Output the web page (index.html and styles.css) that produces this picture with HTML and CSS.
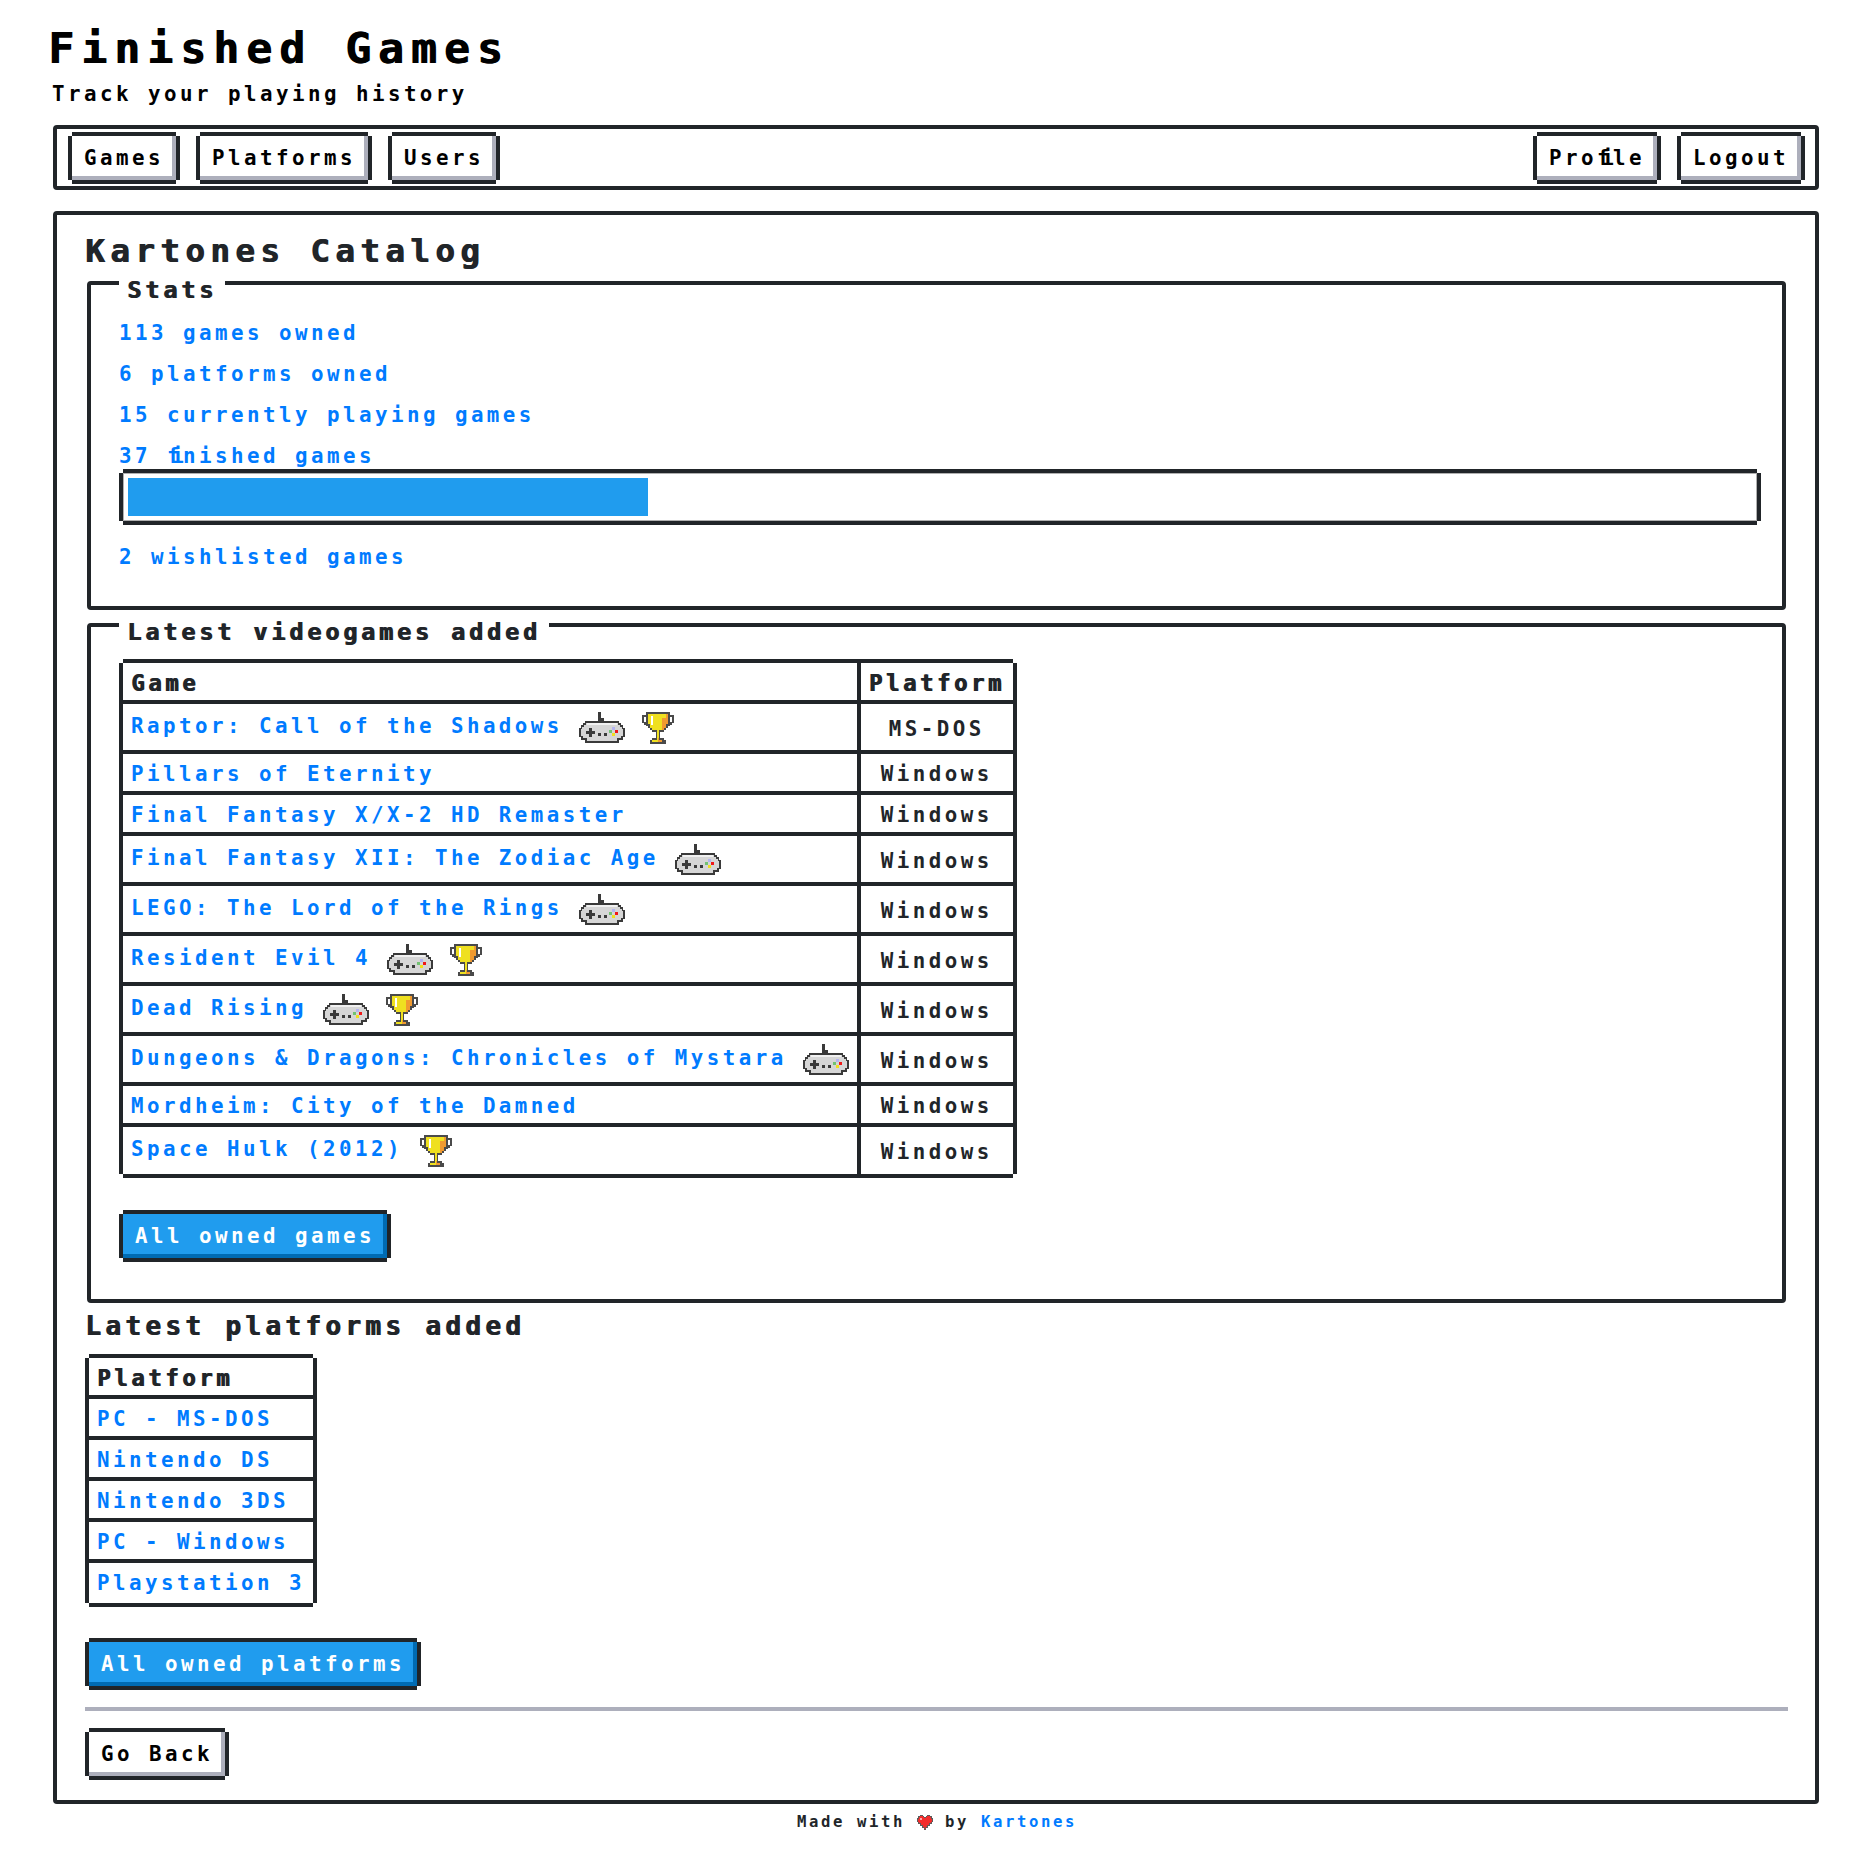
FILE: index.html
```html
<!DOCTYPE html>
<html lang="en">
<head>
  <meta charset="UTF-8">
  <meta name="viewport" content="width=device-width, initial-scale=1.0">
  <title>Finished Games</title>
  <link rel="stylesheet" href="styles.css">
</head>
<body>
  <!-- Icon sprites -->
  <svg class="sprites" xmlns="http://www.w3.org/2000/svg">
    <symbol id="icon-controller" viewBox="0 0 23 16">
      <path fill="#3a3a3a" d="M9.5 0H11V3H12.5V4.5H20V5.5H21V6.5H22V8H23V12.5H22V14H20V15.5H3V14H1V12.5H0V8H1V6.5H2V5.5H3V4.5H9.5Z"/>
      <path fill="#d6d6d6" d="M3.5 5.5H19.5V6.5H20.5V7.5H21.5V8.5H22V12H21V13H19V14.5H4V13H2V12H1V8.5H1.5V7.5H2.5V6.5H3.5Z"/>
      <path fill="#f1f1f1" d="M4 5.5H19V6.5H4Z"/>
      <path fill="#3a3a3a" d="M3.5 9.5H8V11H3.5ZM5 8H6.5V12.5H5ZM9.5 10.5H11V12H9.5ZM12.5 10.5H14V12H12.5Z"/>
      <path fill="#b4b4f0" d="M16.5 7.5H18V9H16.5Z"/>
      <path fill="#72c272" d="M15 9H16.5V10.5H15Z"/>
      <path fill="#f01818" d="M18 9H19.5V10.5H18Z"/>
      <path fill="#efe020" d="M16.5 10.5H18V12H16.5Z"/>
    </symbol>
    <symbol id="icon-trophy" viewBox="0 0 16 16">
      <path fill="#4a4a4a" d="M0 1.5H2V0H14V1.5H16V5.5H15V6.5H14V7H13V8H12V9H11V10H9V13H11V14H12V16H4V14H5V13H7V10H5V9H4V8H3V7H2V6.5H1V5.5H0ZM1 2.5V5H2V2.5ZM14 2.5V5H15V2.5Z"/>
      <path fill="#efe020" d="M3 1H13V6H12V8H11V9H8.5V14H10V15H5V14H7.5V9H5V8H4V6H3Z"/>
      <path fill="#f09a30" d="M12 1H13V6H12V8H11V9H10V3H12ZM8 13H8.5V14H10V15H8Z"/>
      <path fill="#ffffff" d="M4.5 2H5.5V6.5H4.5Z"/>
    </symbol>
    <symbol id="icon-heart" viewBox="0 0 16 15">
      <path fill="#5c5c5c" d="M3 0H6V1H7V2H9V1H10V0H13V1H15V3H16V7H15V9H13V11H11V13H9V15H7V13H5V11H3V9H1V7H0V3H1V1H3Z"/>
      <path fill="#f32c2c" d="M3 1H6V2H7V3H9V2H10V1H13V2H14V4H15V7H14V8H12V10H10V12H8.5V14H7.5V12H6V10H4V8H2V7H1V4H2V2H3Z"/>
      <path fill="#ffa8a8" d="M3 3H5V5H3Z"/>
    </symbol>
  </svg>

  <div class="page">
    <div class="header">
      <h1>Finished Games</h1>
      <p>Track your playing history</p>
    </div>

    <nav class="container main-nav">
      <div class="nav-group">
        <a class="btn" href="#">Games</a>
        <a class="btn" href="#">Platforms</a>
        <a class="btn" href="#">Users</a>
      </div>
      <div class="nav-group">
        <a class="btn" href="#">Pro<span class="ligature">fi</span>le</a>
        <a class="btn" href="#">Logout</a>
      </div>
    </nav>

    <main class="container content">
      <h2>Kartones Catalog</h2>

      <section class="container panel">
        <div class="title">Stats</div>
        <p class="stat"><a href="#">113 games owned</a></p>
        <p class="stat"><a href="#">6 platforms owned</a></p>
        <p class="stat"><a href="#">15 currently playing games</a></p>
        <p class="stat stat-bar"><a href="#">37 <span class="ligature">fi</span>nished games</a></p>
        <div class="progress"><div class="progress-fill" style="width: 32%"></div></div>
        <p class="stat stat-last"><a href="#">2 wishlisted games</a></p>
      </section>

      <section class="container panel panel-last">
        <div class="title">Latest videogames added</div>
        <table class="table">
          <thead>
            <tr><th>Game</th><th>Platform</th></tr>
          </thead>
          <tbody>
            <tr>
              <td><a href="#">Raptor: Call of the Shadows</a> <svg class="icon"><use href="#icon-controller"/></svg> <svg class="icon icon-trophy"><use href="#icon-trophy"/></svg></td>
              <td class="centered">MS-DOS</td>
            </tr>
            <tr><td><a href="#">Pillars of Eternity</a></td><td class="centered">Windows</td></tr>
            <tr><td><a href="#">Final Fantasy X/X-2 HD Remaster</a></td><td class="centered">Windows</td></tr>
            <tr>
              <td><a href="#">Final Fantasy XII: The Zodiac Age</a> <svg class="icon"><use href="#icon-controller"/></svg></td>
              <td class="centered">Windows</td>
            </tr>
            <tr>
              <td><a href="#">LEGO: The Lord of the Rings</a> <svg class="icon"><use href="#icon-controller"/></svg></td>
              <td class="centered">Windows</td>
            </tr>
            <tr>
              <td><a href="#">Resident Evil 4</a> <svg class="icon"><use href="#icon-controller"/></svg> <svg class="icon icon-trophy"><use href="#icon-trophy"/></svg></td>
              <td class="centered">Windows</td>
            </tr>
            <tr>
              <td><a href="#">Dead Rising</a> <svg class="icon"><use href="#icon-controller"/></svg> <svg class="icon icon-trophy"><use href="#icon-trophy"/></svg></td>
              <td class="centered">Windows</td>
            </tr>
            <tr>
              <td><a href="#">Dungeons &amp; Dragons: Chronicles of Mystara</a> <svg class="icon"><use href="#icon-controller"/></svg></td>
              <td class="centered">Windows</td>
            </tr>
            <tr><td><a href="#">Mordheim: City of the Damned</a></td><td class="centered">Windows</td></tr>
            <tr>
              <td><a href="#">Space Hulk (2012)</a> <svg class="icon icon-trophy"><use href="#icon-trophy"/></svg></td>
              <td class="centered">Windows</td>
            </tr>
          </tbody>
        </table>
        <div class="actions"><a class="btn btn-primary" href="#">All owned games</a></div>
      </section>

      <h3>Latest platforms added</h3>
      <table class="table table-platforms">
        <thead>
          <tr><th>Platform</th></tr>
        </thead>
        <tbody>
          <tr><td><a href="#">PC - MS-DOS</a></td></tr>
          <tr><td><a href="#">Nintendo DS</a></td></tr>
          <tr><td><a href="#">Nintendo 3DS</a></td></tr>
          <tr><td><a href="#">PC - Windows</a></td></tr>
          <tr><td><a href="#">Playstation 3</a></td></tr>
        </tbody>
      </table>
      <div class="actions actions-tight"><a class="btn btn-primary" href="#">All owned platforms</a></div>

      <hr>

      <div class="actions-back"><a class="btn" href="#">Go Back</a></div>
    </main>

    <footer class="footer">
      Made with <svg class="icon-heart"><use href="#icon-heart"/></svg> by <a href="#">Kartones</a>
    </footer>
  </div>
</body>
</html>
```

FILE: styles.css
```css
:root {
  --text-color: #212529;
  --link-color: #007bff;
  --primary-color: #209cee;
  --primary-shadow: #006bb3;
  --button-shadow: #adafbc;
}

/* the pixel font is not available, so a wide spaced mono stands in for it:
   font-size is 1.3x the nominal size and the spacing brings the advance back */
* {
  letter-spacing: 0.167em;
}

body {
  font-family: "DejaVu Sans Mono", "Liberation Mono", monospace;
  font-size: 20.8px;
  font-weight: bold;
  line-height: 24px;
  margin: 0;
  background-color: #fff;
  color: var(--text-color);
}

a {
  color: var(--link-color);
  text-decoration: none;
}

/* the pixel font joins "fi" into one cell */
.ligature {
  letter-spacing: -0.4em;
  padding-right: 0.365em;
}

.sprites {
  display: none;
}

.page {
  padding: 0 54px 0 48px;
}

/* Header */
.header {
  padding-top: 24px;
}

.header h1 {
  font-size: 42.9px;
  line-height: 48px;
  margin: 0;
  color: #000;
  text-shadow: 1px 0 0 #000;
}

.header p {
  margin: 10px 0 0 4px;
  color: #000;
}

/* Containers */
.container {
  border: 4px solid var(--text-color);
  border-radius: 4px;
}

.main-nav {
  display: flex;
  justify-content: space-between;
  margin: 19px 0 0 5px;
  padding: 3px 10px 2px 11px;
}

.nav-group {
  display: flex;
  gap: 16px;
}

.content {
  margin: 21px 0 0 5px;
  padding: 18px 27px 20px 28px;
}

.content h2 {
  font-size: 32.5px;
  line-height: 36px;
  margin: 0 0 12px;
  text-shadow: 1px 0 0 var(--text-color);
}

.panel {
  margin: 0 2px 13px;
  padding: 0 21px 37px 28px;
}

.panel-last {
  margin-bottom: 8px;
}

.title {
  display: table;
  font-size: 23.4px;
  margin: -7px 0 19px;
  padding: 0 8px;
  background-color: #fff;
  text-shadow: 1px 0 0 var(--text-color);
}

.stat {
  margin: 0 0 17px;
}

.stat-bar {
  margin-bottom: 5px;
}

.stat-last {
  margin: 24px 0 0;
}

/* Progress bar */
.progress {
  height: 48px;
  margin: 0 4px;
  padding: 5px;
  box-sizing: border-box;
  box-shadow: 0 -4px 0 var(--text-color), 0 4px 0 var(--text-color), -4px 0 0 var(--text-color), 4px 0 0 var(--text-color), inset 0 0 0 1px #b0b0b0;
}

.progress-fill {
  height: 100%;
  background-color: var(--primary-color);
}

/* Buttons */
.btn {
  display: inline-block;
  margin: 4px;
  padding: 10px 12px;
  color: #000;
  background-color: #fff;
  box-shadow: 0 -4px 0 var(--text-color), 0 4px 0 var(--text-color), -4px 0 0 var(--text-color), 4px 0 0 var(--text-color), inset -4px -4px 0 var(--button-shadow);
}

.btn-primary {
  color: #fff;
  background-color: var(--primary-color);
  box-shadow: 0 -4px 0 var(--text-color), 0 4px 0 var(--text-color), -4px 0 0 var(--text-color), 4px 0 0 var(--text-color), inset -4px -4px 0 var(--primary-shadow);
}

.actions {
  display: flex;
  margin-top: 36px;
}

.actions-tight {
  margin-top: 35px;
}

.actions-back {
  display: flex;
}

hr {
  height: 4px;
  margin: 17px 0;
  border: none;
  background-color: var(--button-shadow);
}

/* Tables */
.table {
  margin: 0 4px;
  border-collapse: separate;
  border-spacing: 0;
  box-shadow: 0 -4px 0 var(--text-color), 0 4px 0 var(--text-color), -4px 0 0 var(--text-color), 4px 0 0 var(--text-color);
}

.table th,
.table td {
  padding: 8px 8px 5px;
  border-right: 4px solid var(--text-color);
  border-bottom: 4px solid var(--text-color);
  text-align: left;
  white-space: nowrap;
}

.table th {
  font-size: 22.1px;
  text-shadow: 1px 0 0 var(--text-color);
}

.table th:last-child,
.table td:last-child {
  border-right: none;
}

.table tbody tr:last-child td {
  border-bottom: none;
  padding-bottom: 6px;
}

.table td.centered {
  text-align: center;
}

.table-platforms tbody tr:last-child td {
  padding-bottom: 8px;
}

.icon {
  width: 46px;
  height: 32px;
  margin-bottom: 1px;
  vertical-align: -12px;
}

.icon-trophy {
  width: 32px;
  margin-left: 1px;
}

.content h3 {
  font-size: 26px;
  line-height: 30px;
  margin: 0 0 17px;
  text-shadow: 1px 0 0 var(--text-color);
}

/* Footer */
.footer {
  margin-top: 9px;
  padding: 0 0 24px 7px;
  font-size: 15.6px;
  line-height: 18px;
  text-align: center;
}

.icon-heart {
  width: 16px;
  height: 15px;
  vertical-align: middle;
}
```
